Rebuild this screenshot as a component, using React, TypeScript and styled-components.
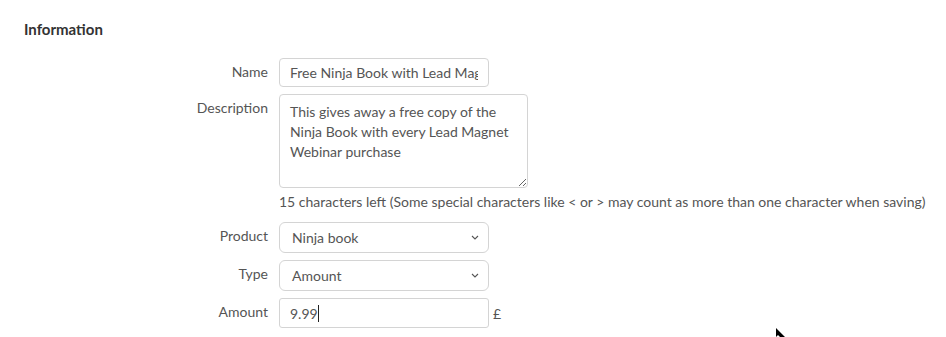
import React from 'react';
import styled, { createGlobalStyle } from 'styled-components';

const GlobalStyle = createGlobalStyle`
  html, body {
    margin: 0;
    padding: 0;
    background: #fff;
  }
  body {
    font-family: 'Lato', 'Open Sans', sans-serif;
    color: #555;
  }
`;

const Page = styled.div`
  position: relative;
  width: 946px;
  height: 337px;
  padding: 19px 24px 0;
  box-sizing: border-box;
  overflow: hidden;
`;

const Heading = styled.h2`
  margin: 0 0 19px;
  font-size: 15px;
  font-weight: 700;
  line-height: 20px;
  color: #333;
`;

const Form = styled.div`
  display: grid;
  grid-template-columns: 244px 1fr;
  column-gap: 11px;
  row-gap: 7px;
  align-items: start;
`;

const Label = styled.label`
  text-align: right;
  font-size: 14px;
  line-height: 16px;
  padding-top: 6px;
  color: #555;
`;

const Field = styled.div`
  display: flex;
  flex-direction: column;
`;

const InlineField = styled.div`
  display: flex;
  align-items: center;
  gap: 4px;
`;

const TextInput = styled.input<{ $radius?: number }>`
  box-sizing: border-box;
  width: 210px;
  height: 29px;
  margin: 0;
  padding: 0 10px;
  border: 1px solid #d4d4d4;
  border-radius: ${(p) => p.$radius ?? 4}px;
  font-family: inherit;
  font-size: 14px;
  color: #555;
  background: #fff;
  outline: none;
`;

const AmountBox = styled.div`
  box-sizing: border-box;
  width: 210px;
  height: 30px;
  padding: 0 10px;
  border: 1px solid #d4d4d4;
  border-radius: 3px;
  display: flex;
  align-items: center;
  font-size: 14px;
  color: #555;
`;

const Caret = styled.span`
  display: inline-block;
  width: 1px;
  height: 17px;
  background: #222;
`;

const TextArea = styled.textarea`
  box-sizing: border-box;
  display: block;
  width: 249px;
  height: 94px;
  margin: 0;
  padding: 7px 10px 0;
  border: 1px solid #d4d4d4;
  border-radius: 4px;
  font-family: inherit;
  font-size: 14px;
  line-height: 20px;
  color: #555;
  white-space: pre;
  overflow: hidden;
  outline: none;
`;

const Help = styled.div`
  margin-top: 6px;
  margin-bottom: 5px;
  font-size: 14px;
  line-height: 16px;
  color: #555;
  white-space: nowrap;
`;

const Select = styled.div`
  box-sizing: border-box;
  width: 210px;
  height: 31px;
  padding: 0 9px 0 12px;
  border: 1px solid #d4d4d4;
  border-radius: 6px;
  display: flex;
  align-items: center;
  justify-content: space-between;
  font-size: 14px;
  color: #555;
`;

const Currency = styled.span`
  font-size: 14px;
  color: #555;
`;

const Pointer = styled.svg`
  position: absolute;
  left: 776px;
  top: 328px;
`;

const Chevron = () => (
  <svg width="8" height="5" viewBox="0 0 8 5">
    <path d="M1 1 L4 4 L7 1" stroke="#555" strokeWidth="1.1" fill="none" />
  </svg>
);

const App = () => {
  return (
    <>
      <GlobalStyle />
      <Page>
        <Heading>Information</Heading>
        <Form>
          <Label>Name</Label>
          <Field>
            <TextInput
              $radius={4}
              readOnly
              value="Free Ninja Book with Lead Magnet Webinar"
            />
          </Field>

          <Label>Description</Label>
          <Field>
            <TextArea
              readOnly
              value={
                'This gives away a free copy of the\nNinja Book with every Lead Magnet\nWebinar purchase'
              }
            />
            <Help>
              15 characters left (Some special characters like &lt; or &gt; may count as more than one
              character when saving)
            </Help>
          </Field>

          <Label>Product</Label>
          <Field>
            <Select>
              Ninja book
              <Chevron />
            </Select>
          </Field>

          <Label>Type</Label>
          <Field>
            <Select>
              Amount
              <Chevron />
            </Select>
          </Field>

          <Label>Amount</Label>
          <InlineField>
            <AmountBox>
              9.99
              <Caret />
            </AmountBox>
            <Currency>£</Currency>
          </InlineField>
        </Form>
        <Pointer width="12" height="12" viewBox="0 0 12 12">
          <path d="M0 0 L0 9 L2 7 L4 9 L9 9 Z" fill="#000" />
        </Pointer>
      </Page>
    </>
  );
};

export default App;
